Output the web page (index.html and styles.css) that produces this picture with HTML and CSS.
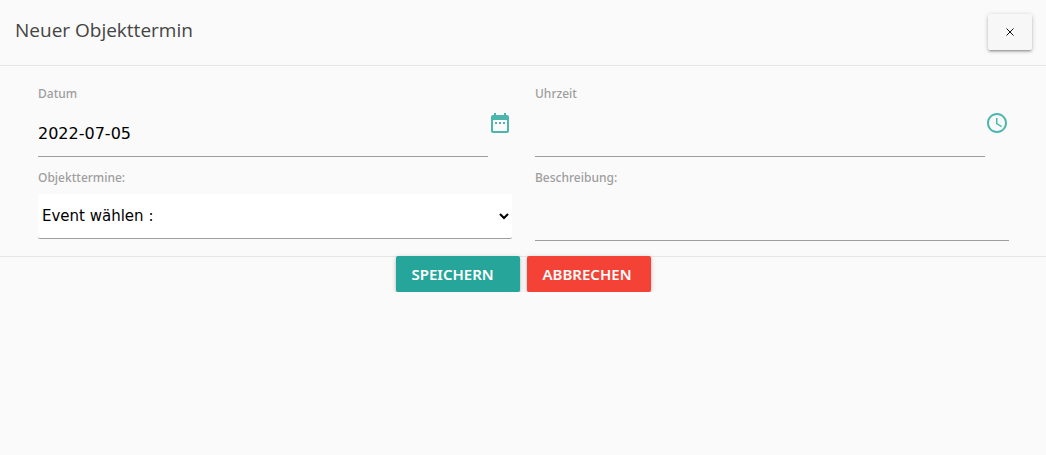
FILE: index.html
```html
<!DOCTYPE html>
<html lang="de">
<head>
  <meta charset="UTF-8">
  <meta name="viewport" content="width=device-width, initial-scale=1">
  <title>Neuer Objekttermin</title>
  <link rel="stylesheet" href="styles.css">
</head>
<body>
  <header class="kopf">
    <h1 class="titel">Neuer Objekttermin</h1>
    <button type="button" class="btn schliessen" aria-label="Schließen">
      <svg width="8" height="8" viewBox="0 0 8 8"><path d="M0.5 0.5l7 7M7.5 0.5l-7 7" fill="none" stroke="#111" stroke-width="1"/></svg>
    </button>
  </header>

  <form id="termin" class="felder">
    <div class="feld">
      <label for="datum">Datum</label>
      <div class="zeile">
        <input type="text" id="datum" value="2022-07-05">
        <svg class="icon" viewBox="0 0 24 24"><path d="M9 11H7v2h2v-2zm4 0h-2v2h2v-2zm4 0h-2v2h2v-2zm2-7h-1V2h-2v2H8V2H6v2H5c-1.11 0-1.99.9-1.99 2L3 20c0 1.1.89 2 2 2h14c1.1 0 2-.9 2-2V6c0-1.1-.9-2-2-2zm0 16H5V9h14v11z"/></svg>
      </div>
    </div>

    <div class="feld">
      <label for="uhrzeit">Uhrzeit</label>
      <div class="zeile">
        <input type="text" id="uhrzeit">
        <svg class="icon" viewBox="0 0 24 24"><path d="M11.99 2C6.47 2 2 6.48 2 12s4.47 10 9.99 10C17.52 22 22 17.52 22 12S17.52 2 11.99 2zM12 20c-4.42 0-8-3.58-8-8s3.58-8 8-8 8 3.58 8 8-3.58 8-8 8zm.5-13H11v6l5.25 3.15.75-1.23-4.5-2.67z"/></svg>
      </div>
    </div>

    <div class="feld">
      <label for="event">Objekttermine:</label>
      <select id="event">
        <option>Event wählen :</option>
      </select>
    </div>

    <div class="feld">
      <label for="beschreibung">Beschreibung:</label>
      <input type="text" id="beschreibung">
    </div>
  </form>

  <footer class="aktionen">
    <button type="submit" form="termin" class="btn speichern">Speichern</button>
    <button type="button" class="btn abbrechen">Abbrechen</button>
  </footer>
</body>
</html>
```
FILE: styles.css
```css
* {
  box-sizing: border-box;
}

body {
  margin: 0;
  background: #fafafa;
  color: #000;
  font-family: Verdana, "DejaVu Sans", sans-serif;
}

.kopf {
  display: flex;
  justify-content: space-between;
  align-items: flex-start;
  height: 66px;
  padding: 14px 14px 0 15px;
  border-bottom: 1px solid #e6e6e6;
}

.titel {
  margin: 0;
  color: #444;
  font: 400 19px/32px "Segoe UI", "Open Sans", sans-serif;
}

.btn {
  height: 36px;
  padding: 0 16px;
  border: none;
  border-radius: 2px;
  color: #fff;
  font: 600 15px/36px "Noto Sans", sans-serif;
  text-transform: uppercase;
  cursor: pointer;
  box-shadow: 0 2px 2px 0 rgba(0,0,0,0.14), 0 3px 1px -2px rgba(0,0,0,0.12), 0 1px 5px 0 rgba(0,0,0,0.2);
}

.schliessen {
  display: flex;
  align-items: center;
  justify-content: center;
  width: 44px;
  padding: 0;
  background: #f7f7f7;
}

.felder {
  display: grid;
  grid-template-columns: 1fr 1fr;
  column-gap: 23px;
  padding: 18px 37px 16px 38px;
  border-bottom: 1px solid #e6e6e6;
}

.feld {
  height: 84px;
}

.feld:nth-child(n+3) {
  height: 72px;
}

.feld label {
  display: block;
  color: #9e9e9e;
  font: 500 12px/20px "Noto Sans", sans-serif;
}

.zeile {
  display: flex;
}

.feld input {
  flex: 1;
  width: 100%;
  min-width: 0;
  height: 53px;
  padding: 6px 0 0;
  border: none;
  border-bottom: 1px solid #9e9e9e;
  background: transparent;
  font: 16px "DejaVu Sans", sans-serif;
  outline: none;
}

.feld select {
  display: block;
  width: 100%;
  height: 45px;
  margin-top: 6px;
  padding: 0;
  border: none;
  border-bottom: 1px solid #9e9e9e;
  border-radius: 2px;
  background: #fff;
  color: #000;
  font: 15px "DejaVu Sans", sans-serif;
}

.icon {
  width: 24px;
  height: 24px;
  margin-top: 7px;
  fill: #4db6ac;
}

.aktionen {
  display: flex;
  justify-content: center;
  gap: 7px;
  margin-top: -1px;
}

.aktionen .btn {
  min-width: 124px;
  text-align: left;
}

.speichern {
  background: #26a69a;
}

.abbrechen {
  background: #f44336;
}
```
